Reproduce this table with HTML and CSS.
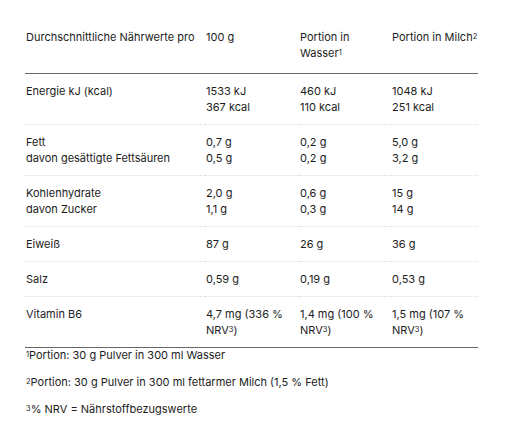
FILE: index.html
```html
<!DOCTYPE html>
<html lang="de">
<head>
<meta charset="utf-8">
<link rel="stylesheet" href="styles.css">
</head>
<body>
<div class="wrap">
<table class="nt">
  <colgroup>
    <col class="c1"><col class="c2"><col class="c3"><col class="c4">
  </colgroup>
  <thead>
    <tr>
      <th>Durchschnittliche Nährwerte pro</th>
      <th>100 g</th>
      <th>Portion in Wasser<sup>1</sup></th>
      <th>Portion in Milch<sup>2</sup></th>
    </tr>
  </thead>
  <tbody>
    <tr><td>Energie kJ (kcal)</td><td>1533 kJ<br>367 kcal</td><td>460 kJ<br>110 kcal</td><td>1048 kJ<br>251 kcal</td></tr>
    <tr><td>Fett<br>davon gesättigte Fettsäuren</td><td>0,7 g<br>0,5 g</td><td>0,2 g<br>0,2 g</td><td>5,0 g<br>3,2 g</td></tr>
    <tr><td>Kohlenhydrate<br>davon Zucker</td><td>2,0 g<br>1,1 g</td><td>0,6 g<br>0,3 g</td><td>15 g<br>14 g</td></tr>
    <tr><td>Eiweiß</td><td>87 g</td><td>26 g</td><td>36 g</td></tr>
    <tr><td>Salz</td><td>0,59 g</td><td>0,19 g</td><td>0,53 g</td></tr>
    <tr class="last"><td>Vitamin B6</td><td>4,7 mg (336 % NRV<sup>3</sup>)</td><td>1,4 mg (100 % NRV<sup>3</sup>)</td><td>1,5 mg (107 % NRV<sup>3</sup>)</td></tr>
  </tbody>
</table>
<p class="fn"><sup>1</sup>Portion: 30 g Pulver in 300 ml Wasser</p>
<p class="fn"><sup>2</sup>Portion: 30 g Pulver in 300 ml fettarmer Milch (1,5 % Fett)</p>
<p class="fn"><sup>3</sup>% NRV = Nährstoffbezugswerte</p>
</div>
</body>
</html>
```
FILE: styles.css
```css
html, body {
  margin: 0;
  padding: 0;
  background: #fff;
}
body {
  font-family: Inter, "Open Sans", sans-serif;
  font-size: 11px;
  line-height: 16px;
  color: #1c1c1c;
}
.wrap {
  padding: 19px 0 0 25px;
}
.nt {
  border-collapse: collapse;
  table-layout: fixed;
  width: 453px;
}
.c1 { width: 180px; }
.c2 { width: 94px; }
.c3 { width: 92px; }
.c4 { width: 87px; }
.nt th, .nt td {
  text-align: left;
  vertical-align: top;
  font-weight: 400;
  padding: 9px 0 9px 1px;
}
.nt th {
  padding-top: 10px;
  padding-bottom: 12px;
  border-bottom: 1px solid #666;
}
.nt td {
  border-bottom: 1px dotted #ddd;
}
.nt tr.last td {
  border-bottom: 1px solid #666;
}
.nt td:nth-child(2), .nt td:nth-child(3) {
  padding-right: 4px;
}
.nt th:nth-child(3) {
  padding-right: 6px;
}
sup {
  font-size: 7.5px;
  line-height: 1;
  vertical-align: 2px;
}
.fn {
  margin: 0 0 12px 1px;
  line-height: 15px;
}
```
